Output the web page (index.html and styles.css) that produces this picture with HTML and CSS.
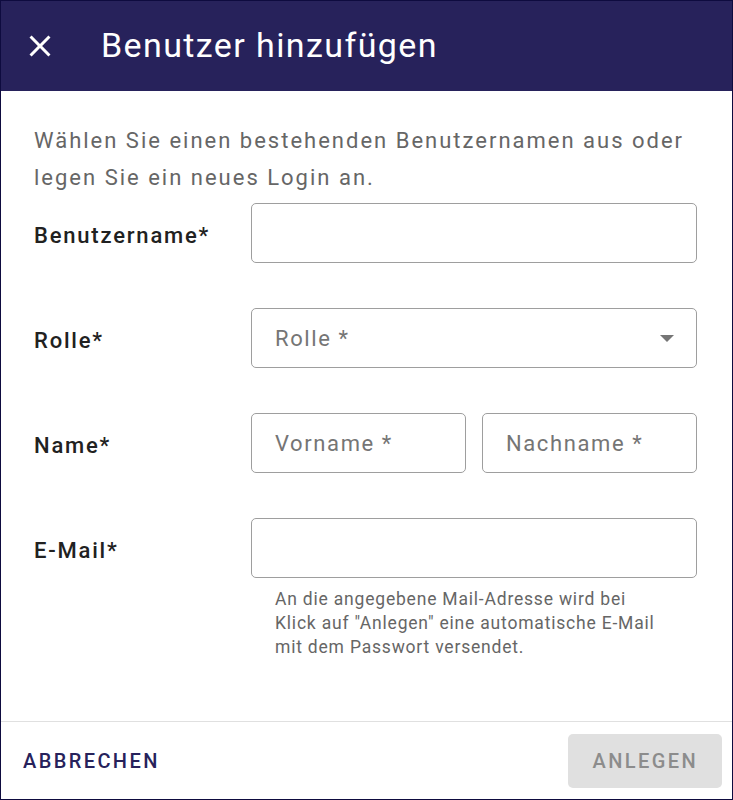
FILE: index.html
```html
<!DOCTYPE html>
<html lang="de">
<head>
<meta charset="utf-8">
<title>Benutzer hinzufügen</title>
<link rel="stylesheet" href="styles.css">
</head>
<body>
<div class="dialog">
  <header class="header">
    <button class="close" aria-label="Schließen">
      <svg viewBox="0 0 24 24" width="36" height="36"><path fill="#fff" d="M19 6.41L17.59 5 12 10.59 6.41 5 5 6.41 10.59 12 5 17.59 6.41 19 12 13.41 17.59 19 19 17.59 13.41 12z"/></svg>
    </button>
    <h1 class="title">Benutzer hinzufügen</h1>
  </header>
  <main class="content">
    <p class="intro">Wählen Sie einen bestehenden Benutzernamen aus oder legen Sie ein neues Login an.</p>
    <div class="rows">
      <div class="row">
        <div class="label">Benutzername*</div>
        <div class="fields"><div class="field"></div></div>
      </div>
      <div class="row">
        <div class="label">Rolle*</div>
        <div class="fields">
          <div class="field select"><span class="ph">Rolle *</span><span class="arrow"></span></div>
        </div>
      </div>
      <div class="row">
        <div class="label">Name*</div>
        <div class="fields two">
          <div class="field"><span class="ph">Vorname *</span></div>
          <div class="field"><span class="ph">Nachname *</span></div>
        </div>
      </div>
      <div class="row">
        <div class="label">E-Mail*</div>
        <div class="fields"><div class="field"></div></div>
      </div>
    </div>
    <p class="hint">An die angegebene Mail-Adresse wird bei<br>Klick auf "Anlegen" eine automatische E-Mail<br>mit dem Passwort versendet.</p>
  </main>
  <footer class="footer">
    <button class="btn cancel">ABBRECHEN</button>
    <button class="btn create" disabled>ANLEGEN</button>
  </footer>
</div>
</body>
</html>
```
FILE: styles.css
```css
* { box-sizing: border-box; }
html, body { margin: 0; padding: 0; }
body { font-family: Roboto, "Liberation Sans", sans-serif; background: #fff; }
.dialog {
  width: 733px; height: 800px;
  border: 1px solid #0e0b3f;
  display: flex; flex-direction: column;
}
.header {
  height: 90px; background: #27225b;
  display: flex; align-items: center;
  padding-left: 21px;
}
.close {
  background: none; border: 0; padding: 0; margin: 0;
  width: 36px; height: 36px; display: flex;
  cursor: pointer;
}
.title {
  margin: -2px 0 0 43px;
  color: #fff; font-weight: 400; font-size: 34px;
  letter-spacing: 1.4px;
}
.content { flex: 1; padding: 31px 35px 0 33px; }
.intro {
  margin: 0; font-size: 22px; line-height: 37px;
  color: #666; letter-spacing: 2px;
}
.rows { margin-top: 7px; display: flex; flex-direction: column; gap: 45px; }
.row { display: flex; align-items: center; height: 60px; }
.label {
  width: 217px; font-size: 22px; font-weight: 500; color: #212121;
  letter-spacing: 1.8px; padding-top: 5px;
}
.fields { flex: 1; display: flex; gap: 16px; }
.field {
  flex: 1; height: 60px;
  border: 1px solid #9e9e9e; border-radius: 5px;
  display: flex; align-items: center;
  padding: 0 22px 0 23px;
}
.ph { font-size: 22px; color: #757575; letter-spacing: 1.6px; }
.select { justify-content: space-between; }
.arrow {
  width: 0; height: 0;
  border-left: 7px solid transparent; border-right: 7px solid transparent;
  border-top: 7px solid #757575;
}
.hint {
  margin: 9px 0 0 241px; font-size: 17.5px; line-height: 24px;
  color: #666; letter-spacing: 0.8px;
}
.footer {
  height: 78px; border-top: 1px solid #e0e0e0;
  display: flex; align-items: center; justify-content: space-between;
  padding: 0 10px 0 9px;
}
.btn {
  font-family: Roboto, "Liberation Sans", sans-serif;
  font-size: 20px; font-weight: 500; letter-spacing: 2.4px;
  border: 0; border-radius: 5px; height: 54px;
  padding: 0 13px; background: none;
}
.cancel { color: #27225b; }
.create { background: #e0e0e0; color: #8c8c8c; padding: 0 24px 0 25px; }
```
